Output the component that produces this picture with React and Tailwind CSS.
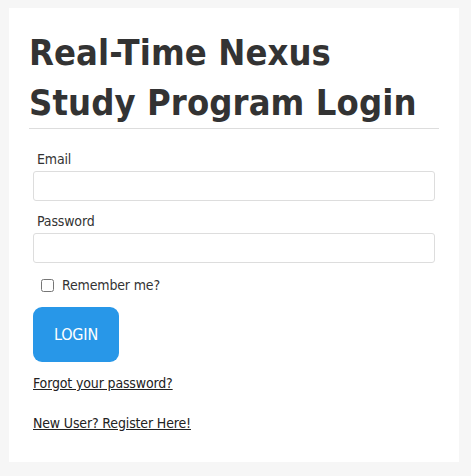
export default function App() {
  return (
    <div
      className="min-h-[476px] bg-[#f6f6f6] pt-[8px] pl-[9px] text-[#333]"
      style={{ fontFamily: '"DejaVu Sans Condensed", "DejaVu Sans", sans-serif' }}
    >
      <div className="w-[450px] bg-white px-5 pt-5 pb-[29px]">
        <h1 className="border-b border-[#dddddd] text-[36px] font-bold leading-[50px] tracking-[0.1px]">
          Real-Time Nexus Study Program Login
        </h1>
        <form className="mt-5 px-1 tracking-[-0.15px]" onSubmit={(e) => e.preventDefault()}>
          <label className="block pl-1 text-[14px] leading-[20px]">Email</label>
          <input
            type="email"
            className="mt-[2px] block h-[30px] w-full rounded-[3px] border border-[#dddddd] bg-white px-2 text-[14px] outline-none"
          />
          <label className="mt-[10px] block pl-1 text-[14px] leading-[20px]">Password</label>
          <input
            type="password"
            className="mt-[2px] block h-[30px] w-full rounded-[3px] border border-[#dddddd] bg-white px-2 text-[14px] outline-none"
          />
          <label className="mt-[12px] flex items-center text-[14px] leading-[20px]">
            <input type="checkbox" className="m-0 ml-[8px] h-[13px] w-[13px]" />
            <span className="ml-[8px]">Remember me?</span>
          </label>
          <button
            type="submit"
            className="mt-[12px] h-[55px] w-[86px] rounded-[9px] bg-[#2897e8] text-[16px] text-white"
          >
            LOGIN
          </button>
          <div className="mt-[11px] text-[14px] leading-[20px]">
            <a href="#" className="text-[#222] underline">Forgot your password?</a>
          </div>
          <div className="mt-[20px] text-[14px] leading-[20px]">
            <a href="#" className="text-[#222] underline">New User? Register Here!</a>
          </div>
        </form>
      </div>
    </div>
  );
}
